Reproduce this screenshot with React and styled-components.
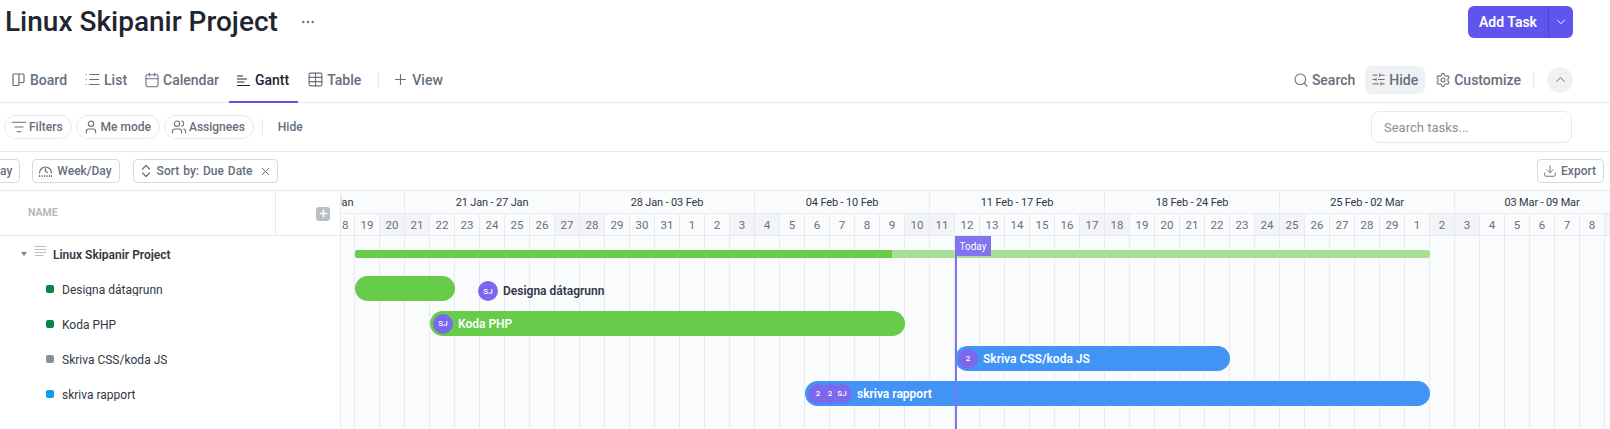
import React from "react";
import styled, { createGlobalStyle } from "styled-components";
import {
  List, Calendar, Table, Plus, Search, SlidersHorizontal, Settings, ChevronUp, ChevronDown,
  ListFilter, User, Users, X, Download, Ellipsis,
} from "lucide-react";

const Global = createGlobalStyle`
  html, body { margin: 0; padding: 0; background: #fff; overflow: hidden; height: 429px; }
  body { font-family: Roboto, "Noto Sans", sans-serif; color: #202530; }
  * { box-sizing: border-box; }
  .lucide { stroke-width: 1.6; }
`;

const Page = styled.div`width: 1610px; height: 429px; overflow: hidden; display: flex; flex-direction: column;`;

const TitleBar = styled.header`height: 44px; flex: none; display: flex; align-items: center; padding: 0 37px 0 5px;`;
const Title = styled.h1`margin: 0; font-size: 28px; font-weight: 500; line-height: 44px; color: #202530;`;
const More = styled.span`display: flex; margin-left: 22px; color: #656f7d;`;
const AddGroup = styled.div`margin-left: auto; display: flex; height: 32px; width: 105px; background: #5f55ee; border-radius: 6px; color: #fff;`;
const AddMain = styled.span`flex: 1; display: flex; align-items: center; justify-content: center; font-size: 14px; font-weight: 600; border-right: 1px solid #4f46c8;`;
const AddCaret = styled.span`width: 24px; display: flex; align-items: center; justify-content: center;`;

const TabBar = styled.nav`height: 59px; flex: none; padding: 13px 37px 0 5px; display: flex; align-items: stretch; gap: 4px; border-bottom: 1px solid #e8eaed;`;
const Tab = styled.div`
  display: flex; align-items: center; gap: 3px; font-size: 14px; font-weight: 500;
  padding: ${(p) => (p.$active ? "0 9px 0 6px" : "0 8px 0 5px")};
  color: ${(p) => (p.$active ? "#202530" : "#656f7d")};
  box-shadow: ${(p) => (p.$active ? "inset 0 -2px 0 #5f55ee" : "none")};
  margin: ${(p) => (p.$active ? "0 0 -1px -2px" : "0")};
  svg { flex: none; }
`;
const VDivider = styled.span`align-self: center; width: 1px; height: 16px; background: #e8eaed; margin: ${(p) => p.$m || "0 5px"};`;
const RightTools = styled.div`margin-left: auto; display: flex; align-items: center;`;
const Tool = styled.div`
  display: flex; align-items: center; gap: 3px; height: 28px; font-size: 14px; font-weight: 500; color: #656f7d;
  padding: ${(p) => (p.$on ? "0 7px 0 6px" : "0")}; border-radius: 6px; background: ${(p) => (p.$on ? "#f0f1f3" : "transparent")};
  margin: ${(p) => p.$m || "0"};
`;
const RoundBtn = styled.span`width: 26px; height: 26px; border-radius: 50%; background: #f0f1f3; color: #656f7d; display: flex; align-items: center; justify-content: center;`;

const FilterBar = styled.div`height: 49px; flex: none; padding: 0 38px 0 4px; display: flex; align-items: center; gap: 4px; border-bottom: 1px solid #e8eaed;`;
const Chip = styled.div`
  height: 24px; display: flex; align-items: center; gap: 2px; padding: 0 8px 0 6px; border: 1px solid #e8eaed; border-radius: 12px;
  font-size: 12px; font-weight: 500; color: #656f7d;
`;
const PlainLabel = styled.span`font-size: 12px; font-weight: 500; color: #656f7d; margin-left: 11px;`;
const SearchBox = styled.div`margin-left: auto; width: 201px; height: 32px; display: flex; align-items: center; padding-left: 12px; border: 1px solid #e8eaed; border-radius: 8px; font-size: 13px; color: #87909e;`;

const SortBar = styled.div`height: 39px; flex: none; padding: 0 6px 0 0; display: flex; align-items: center; gap: 12px; border-bottom: 1px solid #e8eaed; overflow: hidden;`;
const OutlineBtn = styled.div`
  height: 24px; display: flex; align-items: center; gap: 4px; padding: 0 7px 0 5px; border: 1px solid #d6d9de; border-radius: 4px;
  font-size: 12px; font-weight: 500; word-spacing: 1px; color: #656f7d; flex: none; margin: ${(p) => p.$m || "0"};
`;
const CloseMark = styled.span`display: flex; color: #4f5762; margin: 0 -2px 0 2px;`;
const SortSvg = styled.svg`margin: 0 2px;`;

const Gantt = styled.section`flex: 1; display: flex; min-height: 0;`;
const SidePanel = styled.aside`width: 340px; flex: none; display: flex; flex-direction: column; background: #fff;`;
const SideHead = styled.div`height: 45px; flex: none; display: flex; border-bottom: 1px solid #e8eaed;`;
const NameCell = styled.div`width: 276px; padding-left: 28px; display: flex; align-items: center; border-right: 1px solid #e8eaed; font-size: 10.5px; font-weight: 600; color: #b0b4bb; padding-bottom: 1px;`;
const AddCol = styled.div`flex: 1; display: flex; align-items: center; justify-content: flex-end; padding-right: 10px; padding-top: 1px;`;
const AddColIcon = styled.span`width: 14px; height: 14px; border-radius: 3px; background: #b9bec7; color: #fff; display: flex; align-items: center; justify-content: center; svg { stroke-width: 3.5; }`;
const SideRow = styled.div`height: 35px; display: flex; align-items: center; padding-left: ${(p) => p.$indent}px;`;
const Caret = styled.span`width: 0; height: 0; border: 3.5px solid transparent; border-top: 4px solid #7c828d; border-bottom: 0; margin-right: 7px;`;
const DocSvg = styled.svg`margin-bottom: 4px;`;
const RowName = styled.span`
  font-size: 12px; line-height: 14px; height: 13px; overflow: hidden; white-space: nowrap; color: #303744;
  font-weight: ${(p) => (p.$bold ? 600 : 400)}; margin-left: ${(p) => p.$ml}px; position: relative; top: ${(p) => p.$top || 1}px;
`;
const StatusDot = styled.span`width: 8px; height: 8px; border-radius: 2px; background: ${(p) => p.$c};`;

const Timeline = styled.div`flex: 1; min-width: 0; overflow: hidden; border-left: 1px solid #e8eaed; background: #fafbfc; display: flex; flex-direction: column;`;
const Track = styled.div`width: 1750px; margin-left: -112px; flex: 1; display: flex; flex-direction: column; position: relative;`;
const WeekRow = styled.div`height: 23px; flex: none; display: flex; border-bottom: 1px solid #e8eaed;`;
const WeekCell = styled.div`width: 175px; flex: none; border-left: 1px solid #e8eaed; display: flex; align-items: center; justify-content: center; font-size: 11px; letter-spacing: -0.15px; color: #303744; white-space: nowrap;`;
const DayRow = styled.div`height: 22px; flex: none; display: flex; border-bottom: 1px solid #e8eaed;`;
const DayCell = styled.div`width: 25px; flex: none; border-left: 1px solid #e8eaed; display: flex; align-items: center; justify-content: center; font-size: 11.5px; color: #656f7d; background: ${(p) => (p.$weekend ? "#f3f4f7" : "transparent")};`;
const Body = styled.div`flex: 1; position: relative; background-image: linear-gradient(to right, #e8eaed 1px, transparent 1px); background-size: 25px 100%;`;
const BarRow = styled.div`height: 35px; position: relative;`;
const SummaryBar = styled.div`position: absolute; top: 14px; height: 8px; border-radius: 3px; overflow: hidden; background: #a6e097;`;
const SummaryFill = styled.div`height: 100%; background: #66cc4a;`;
const Bar = styled.div`position: absolute; top: 5px; height: 25px; border-radius: 12.5px; background: ${(p) => p.$c}; display: flex; align-items: center; padding-left: 3px; color: #fff; font-size: 12px; font-weight: 600; white-space: nowrap;`;
const Faces = styled.div`display: flex; margin-right: 5px;`;
const Avatar = styled.span`width: 20px; height: 20px; flex: none; border-radius: 50%; background: #7b68ee; color: #fff; display: flex; align-items: center; justify-content: center; font-size: 8px; font-weight: 500; & + & { margin-left: -8px; }`;
const OuterLabel = styled.div`position: absolute; top: 10px; height: 20px; display: flex; align-items: center; gap: 5px; font-size: 12px; font-weight: 600; color: #303744; white-space: nowrap;`;
const TodayLine = styled.div`position: absolute; top: 0; bottom: 0; width: 2px; background: #8075ee;`;
const TodayTag = styled.div`position: absolute; top: 0; height: 20px; width: 36px; background: #8075ee; color: #fff; font-size: 10px; display: flex; align-items: center; justify-content: center;`;

const BoardIcon = () => (
  <svg width="17" height="17" viewBox="-1.5 -1.5 17 17" fill="none" stroke="currentColor" strokeWidth="1.2" strokeLinejoin="round">
    <path d="M2.5 1.5h9a1 1 0 0 1 1 1v6.5a1 1 0 0 1-1 1H7.5v2a1 1 0 0 1-1 1h-4a1 1 0 0 1-1-1v-9.5a1 1 0 0 1 1-1z" />
    <path d="M7.5 1.5v8.5" />
  </svg>
);
const GanttIcon = () => (
  <svg width="17" height="17" viewBox="-1.5 -1.5 17 17" fill="none" stroke="currentColor" strokeWidth="1.2" strokeLinecap="round">
    <path d="M1 2.5h5M1 5.5h9M1 8.5h6.5M1 12h12" />
  </svg>
);
const GaugeIcon = () => (
  <svg width="15" height="15" viewBox="0 0 15 15" fill="none" stroke="currentColor" strokeWidth="1.2" strokeLinecap="round">
    <path d="M1.5 9a6 6 0 1 1 12 0" />
    <path d="M7.5 4.5v3l2 1" />
    <path d="M1.5 11.5v2M4 11.5v2M6.5 11.5v2M9 11.5v2M11.5 11.5v2M13.5 11.5v2" strokeDasharray="1 1" />
  </svg>
);
const SortIcon = () => (
  <SortSvg width="10" height="14" viewBox="0 0 10 14" fill="none" stroke="currentColor" strokeWidth="1.2" strokeLinecap="round" strokeLinejoin="round">
    <path d="M1.5 5l3.5-3.5L8.5 5M1.5 9l3.5 3.5L8.5 9" />
  </SortSvg>
);
const DocLines = () => (
  <DocSvg width="13" height="12" viewBox="0 0 13 12" fill="none" stroke="#b9bec7" strokeWidth="1">
    <path d="M0.5 0.5h12M0.5 3.5h12M0.5 6.5h12M0.5 9.5h9" />
  </DocSvg>
);

const weeks = ["14 Jan - 20 Jan", "21 Jan - 27 Jan", "28 Jan - 03 Feb", "04 Feb - 10 Feb", "11 Feb - 17 Feb", "18 Feb - 24 Feb", "25 Feb - 02 Mar", "03 Mar - 09 Mar", "10 Mar - 16 Mar", "17 Mar - 23 Mar"];
const days = [
  ...Array.from({ length: 18 }, (_, i) => i + 14),
  ...Array.from({ length: 29 }, (_, i) => i + 1),
  ...Array.from({ length: 23 }, (_, i) => i + 1),
];
const DAY = 25;
const sideRows = [
  { name: "Designa dátagrunn", c: "#008844" },
  { name: "Koda PHP", c: "#008844" },
  { name: "Skriva CSS/koda JS", c: "#87909e" },
  { name: "skriva rapport", c: "#0f9ced" },
];

const span = (start, count) => ({ left: start * DAY + 1, width: count * DAY });

export default function App() {
  return (
    <Page>
      <Global />
      <TitleBar>
        <Title>Linux Skipanir Project</Title>
        <More><Ellipsis size={16} /></More>
        <AddGroup>
          <AddMain>Add Task</AddMain>
          <AddCaret><ChevronDown size={14} /></AddCaret>
        </AddGroup>
      </TitleBar>
      <TabBar>
        <Tab><BoardIcon />Board</Tab>
        <Tab><List size={17} />List</Tab>
        <Tab><Calendar size={16} />Calendar</Tab>
        <Tab $active><GanttIcon />Gantt</Tab>
        <Tab><Table size={17} />Table</Tab>
        <VDivider $m="0 4px 0 5px" />
        <Tab><Plus size={17} />View</Tab>
        <RightTools>
          <Tool><Search size={16} />Search</Tool>
          <Tool $on $m="0 10px"><SlidersHorizontal size={15} />Hide</Tool>
          <Tool><Settings size={16} />Customize</Tool>
          <VDivider $m="0 13px 0 12px" />
          <RoundBtn><ChevronUp size={15} /></RoundBtn>
        </RightTools>
      </TabBar>
      <FilterBar>
        <Chip><ListFilter size={16} />Filters</Chip>
        <Chip><User size={16} />Me mode</Chip>
        <Chip><Users size={16} />Assignees</Chip>
        <VDivider $m="0 0 0 4px" />
        <PlainLabel>Hide</PlainLabel>
        <SearchBox>Search tasks...</SearchBox>
      </FilterBar>
      <SortBar>
        <OutlineBtn $m="0 0 0 -26px">Today</OutlineBtn>
        <OutlineBtn $m="0 1px 0 0"><GaugeIcon />Week/Day</OutlineBtn>
        <OutlineBtn><SortIcon />Sort by: Due Date<CloseMark><X size={13} /></CloseMark></OutlineBtn>
        <OutlineBtn $m="0 0 0 auto"><Download size={14} />Export</OutlineBtn>
      </SortBar>
      <Gantt>
        <SidePanel>
          <SideHead>
            <NameCell>NAME</NameCell>
            <AddCol><AddColIcon><Plus size={11} /></AddColIcon></AddCol>
          </SideHead>
          <SideRow $indent={21}>
            <Caret />
            <DocLines />
            <RowName $bold $ml={6} $top={0}>Linux Skipanir Project</RowName>
          </SideRow>
          {sideRows.map((r) => (
            <SideRow key={r.name} $indent={46}>
              <StatusDot $c={r.c} />
              <RowName $ml={8}>{r.name}</RowName>
            </SideRow>
          ))}
        </SidePanel>
        <Timeline>
          <Track>
            <WeekRow>{weeks.map((w) => <WeekCell key={w}>{w}</WeekCell>)}</WeekRow>
            <DayRow>
              {days.map((d, i) => <DayCell key={i} $weekend={i % 7 === 6 || (i % 7 === 0 && i > 0)}>{d}</DayCell>)}
            </DayRow>
            <Body>
              <BarRow>
                <SummaryBar style={{ left: 126, width: 1075 }}><SummaryFill style={{ width: 537 }} /></SummaryBar>
              </BarRow>
              <BarRow>
                <Bar $c="#66cc4a" style={{ left: 126, width: 100 }} />
                <OuterLabel style={{ left: 249 }}><Avatar>SJ</Avatar>Designa dátagrunn</OuterLabel>
              </BarRow>
              <BarRow>
                <Bar $c="#66cc4a" style={span(8, 19)}><Faces><Avatar>SJ</Avatar></Faces>Koda PHP</Bar>
              </BarRow>
              <BarRow>
                <Bar $c="#4194f6" style={{ left: 726, width: 275 }}><Faces><Avatar>2</Avatar></Faces>Skriva CSS/koda JS</Bar>
              </BarRow>
              <BarRow>
                <Bar $c="#4194f6" style={{ left: 576, width: 625 }}><Faces><Avatar>2</Avatar><Avatar>2</Avatar><Avatar>SJ</Avatar></Faces>skriva rapport</Bar>
              </BarRow>
              <TodayLine style={{ left: 726 }} />
              <TodayTag style={{ left: 726 }}>Today</TodayTag>
            </Body>
          </Track>
        </Timeline>
      </Gantt>
    </Page>
  );
}
